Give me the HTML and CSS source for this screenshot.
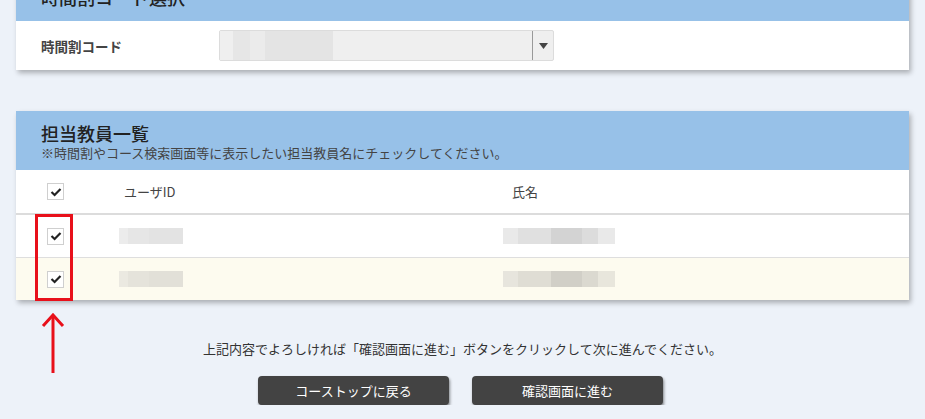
FILE: index.html
```html
<!DOCTYPE html>
<html lang="ja">
<head>
<meta charset="utf-8">
<title>担当教員設定</title>
<link rel="stylesheet" href="styles.css">
</head>
<body>
<main class="page">
  <section class="panel panel-code">
    <header class="panel-head panel-head-compact">
      <h2 class="panel-title">時間割コード選択</h2>
    </header>
    <div class="form-row">
      <label class="form-label">時間割コード</label>
      <div class="select">
        <span class="select-value"></span>
        <span class="select-arrow"><svg width="9" height="6" viewBox="0 0 9 6"><path d="M0 0H9L4.5 6Z" fill="#444"/></svg></span>
      </div>
    </div>
  </section>

  <div class="teacher-wrap">
    <section class="panel panel-teachers">
      <header class="panel-head">
        <h2 class="panel-title">担当教員一覧</h2>
        <p class="panel-note">※時間割やコース検索画面等に表示したい担当教員名にチェックしてください。</p>
      </header>
      <div class="table">
        <div class="trow thead">
          <span class="check"><svg width="12" height="10" viewBox="0 0 12 10"><path d="M1.5 5L4.6 8L10.5 2" fill="none" stroke="#222" stroke-width="2.2"/></svg></span>
          <span class="cell">ユーザID</span>
          <span class="cell">氏名</span>
        </div>
        <div class="trow">
          <span class="check"><svg width="12" height="10" viewBox="0 0 12 10"><path d="M1.5 5L4.6 8L10.5 2" fill="none" stroke="#222" stroke-width="2.2"/></svg></span>
          <span class="cell"><span class="masked masked-id"></span></span>
          <span class="cell"><span class="masked masked-name"></span></span>
        </div>
        <div class="trow trow-alt">
          <span class="check"><svg width="12" height="10" viewBox="0 0 12 10"><path d="M1.5 5L4.6 8L10.5 2" fill="none" stroke="#222" stroke-width="2.2"/></svg></span>
          <span class="cell"><span class="masked masked-id"></span></span>
          <span class="cell"><span class="masked masked-name"></span></span>
        </div>
      </div>
    </section>
    <div class="mark-box"></div>
    <svg class="mark-arrow" width="24" height="62" viewBox="0 0 24 62">
      <path d="M12 2V60" stroke="#e8101a" stroke-width="3"/>
      <path d="M2 13L12 2L22 13" fill="none" stroke="#e8101a" stroke-width="3"/>
    </svg>
  </div>

  <p class="guide">上記内容でよろしければ「確認画面に進む」ボタンをクリックして次に進んでください。</p>
  <div class="actions">
    <button class="btn" type="button">コーストップに戻る</button>
    <button class="btn" type="button">確認画面に進む</button>
  </div>
</main>
</body>
</html>
```

FILE: styles.css
```css
* { box-sizing: border-box; }

html, body {
  margin: 0;
  padding: 0;
  background: #edf2f9;
  font-family: "Noto Sans CJK JP", "Noto Sans", sans-serif;
  color: #333;
  overflow: hidden;
}

.page {
  padding: 0 16px;
}

.panel {
  background: #fff;
  box-shadow: 2px 3px 5px rgba(0, 0, 0, 0.28);
}

.panel-code {
  margin-top: -25px;
}

.panel-head {
  background: #97c1e8;
  padding: 10px 25px 9px;
}

.panel-head-compact {
  padding-bottom: 12px;
}

.panel-title {
  margin: 0;
  font-size: 18px;
  line-height: 24px;
  font-weight: 500;
  color: #222;
}

.panel-note {
  margin: 0;
  font-size: 13px;
  line-height: 16px;
  color: #444;
}

.form-row {
  display: flex;
  align-items: center;
  padding: 9px 25px;
}

.form-label {
  width: 178px;
  font-size: 13.5px;
  font-weight: 700;
  color: #444;
}

.select {
  position: relative;
  display: flex;
  width: 335px;
  height: 31px;
  background: #efefef;
  border: 1px solid #dcdcdc;
  border-radius: 2px;
}

.select-value {
  flex: 1;
  background: linear-gradient(90deg,
    #efefef 0 13px,
    #e6e6e6 13px 30px,
    #ebebeb 30px 45px,
    #e4e4e4 45px 113px,
    #efefef 113px);
}

.select-arrow {
  width: 21px;
  border-left: 1px solid #999;
  display: flex;
  align-items: center;
  justify-content: center;
}

.teacher-wrap {
  position: relative;
  margin-top: 41px;
}

.table {
  font-size: 13px;
}

.trow {
  display: grid;
  grid-template-columns: 77px 388px 1fr;
  align-items: center;
  height: 43px;
  padding-left: 31px;
  border-bottom: 1px solid #dedede;
}

.thead {
  height: 45px;
  border-bottom: 2px solid #dcdcdc;
}

.trow:last-child {
  border-bottom: none;
  height: 42px;
}

.trow-alt {
  background: #fdfbef;
}

.check {
  width: 17px;
  height: 17px;
  border: 1px solid #cfcfcf;
  background: #fff;
  display: flex;
  align-items: center;
  justify-content: center;
}

.cell {
  color: #444;
  line-height: 16px;
}

.masked {
  display: block;
  height: 16px;
}

.masked-id {
  width: 64px;
  margin-left: -5px;
  background: linear-gradient(90deg,
    #ececec 0 9px,
    #e6e6e6 9px 30px,
    #e3e3e3 30px 64px);
}

.masked-name {
  width: 112px;
  margin-left: -9px;
  background: linear-gradient(90deg,
    #e9e9e9 0 15px,
    #e0e0e0 15px 48px,
    #d3d3d3 48px 79px,
    #dcdcdc 79px 95px,
    #e9e9e9 95px);
}

.trow-alt .masked-id {
  background: linear-gradient(90deg,
    #ebe9e1 0 9px,
    #e5e3db 9px 30px,
    #e2e0d8 30px 64px);
}

.trow-alt .masked-name {
  background: linear-gradient(90deg,
    #e7e5dd 0 15px,
    #dfddd4 15px 48px,
    #d1cfc7 48px 79px,
    #dbd9d0 79px 95px,
    #e8e6dc 95px);
}

.mark-box {
  position: absolute;
  left: 19px;
  top: 103px;
  width: 38px;
  height: 87px;
  border: 3px solid #e8101a;
}

.mark-arrow {
  position: absolute;
  left: 25px;
  top: 202px;
}

.guide {
  margin: 39px 0 0;
  text-align: center;
  font-size: 13px;
  line-height: 20px;
  color: #333;
}

.actions {
  display: flex;
  justify-content: center;
  gap: 23px;
  margin-top: 17px;
  padding-right: 4px;
}

.btn {
  width: 191px;
  height: 29px;
  border: none;
  border-radius: 4px;
  background: #434343;
  color: #fff;
  font-family: inherit;
  font-size: 13px;
  box-shadow: 1px 2px 3px rgba(0, 0, 0, 0.45);
}
```
